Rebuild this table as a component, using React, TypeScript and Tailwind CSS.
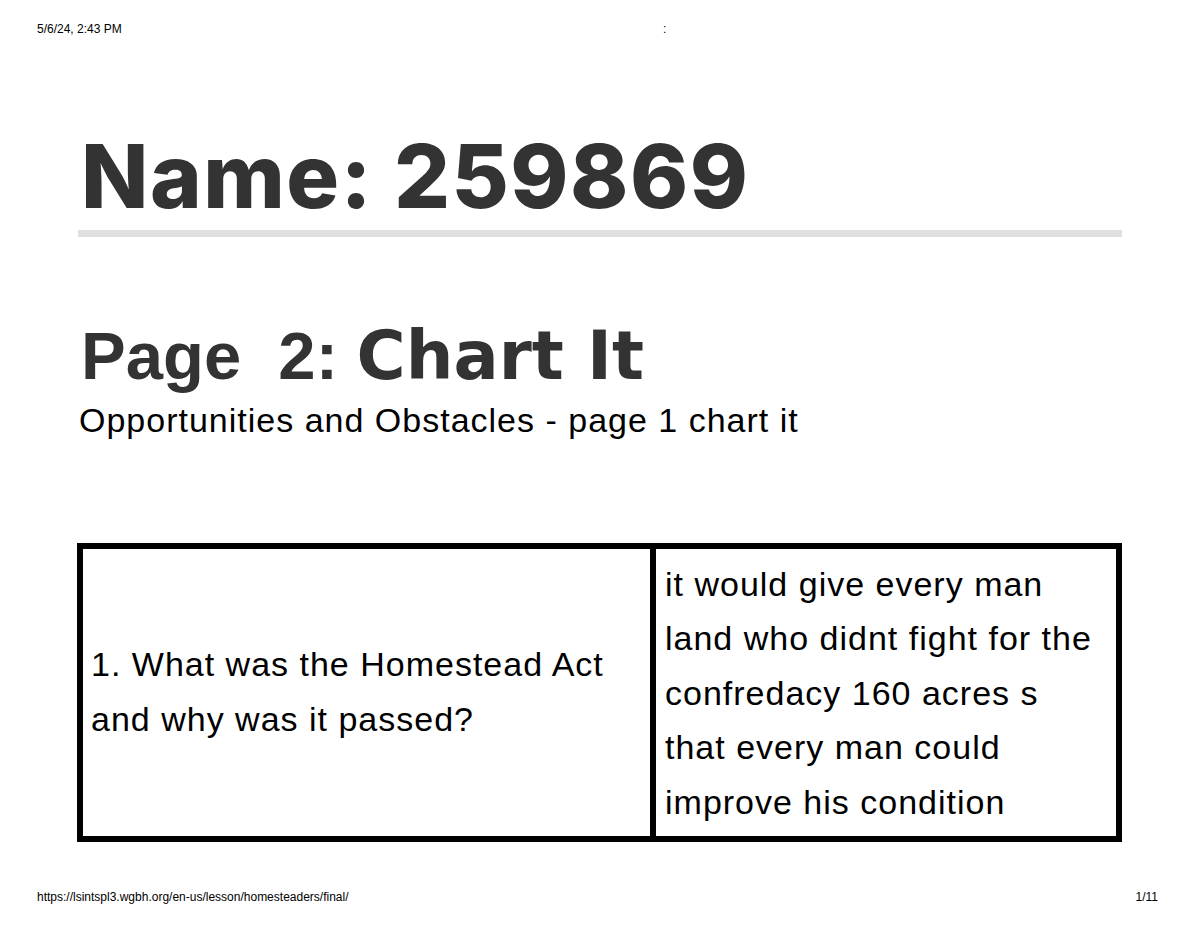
export default function App() {
  return (
    <div className="relative flex h-[927px] w-[1200px] flex-col bg-white" style={{ fontFamily: '"Liberation Sans", Arial, sans-serif' }}>
      <div className="flex h-[58px] items-center px-[37px] text-[12px] text-black">
        <span className="w-[626px]">5/6/24, 2:43 PM</span>
        <span>:</span>
      </div>

      <div className="px-[78px]">
        <h1 className="mt-[74px] pl-[3px] text-[88px] font-extrabold leading-none tracking-[1.5px] text-[#333]" style={{ fontFamily: 'Inter, "Liberation Sans", sans-serif' }}>
          Name: 259869
        </h1>
        <div className="mt-[10px] h-[7px] w-[1044px] bg-[#e0e0e0]" />

        <h2 className="mt-[85px] pl-[3px] text-[67px] font-bold leading-none text-[#333]">
          Page&nbsp; 2:{' '}
          <span className="font-bold" style={{ fontFamily: '"DejaVu Sans", "Liberation Sans", sans-serif' }}>Chart It</span>
        </h2>
        <p className="mt-[9px] pl-[1px] text-[34px] leading-[42.5px] tracking-[1px] text-black">Opportunities and Obstacles - page 1 chart it</p>

        <div className="mt-[101px] -ml-[1px] flex h-[299px] w-[1045px] border-[6px] border-black text-[34px] tracking-[1px] text-black">
          <div className="flex w-[573px] items-center border-r-[6px] border-black pl-[8px] pr-[10px] leading-[55px]">
            <p>1. What was the Homestead Act and why was it passed?</p>
          </div>
          <div className="flex-1 pl-[9px] pr-[12px] pt-[8px] leading-[54.5px]">
            <p>it would give every man land who didnt fight for the confredacy 160 acres s that every man could improve his condition</p>
          </div>
        </div>
      </div>

      <div className="mt-auto flex items-end justify-between px-[37px] pb-[21px] pr-[42px] text-[12px] text-black">
        <span>https://lsintspl3.wgbh.org/en-us/lesson/homesteaders/final/</span>
        <span>1/11</span>
      </div>
    </div>
  )
}
